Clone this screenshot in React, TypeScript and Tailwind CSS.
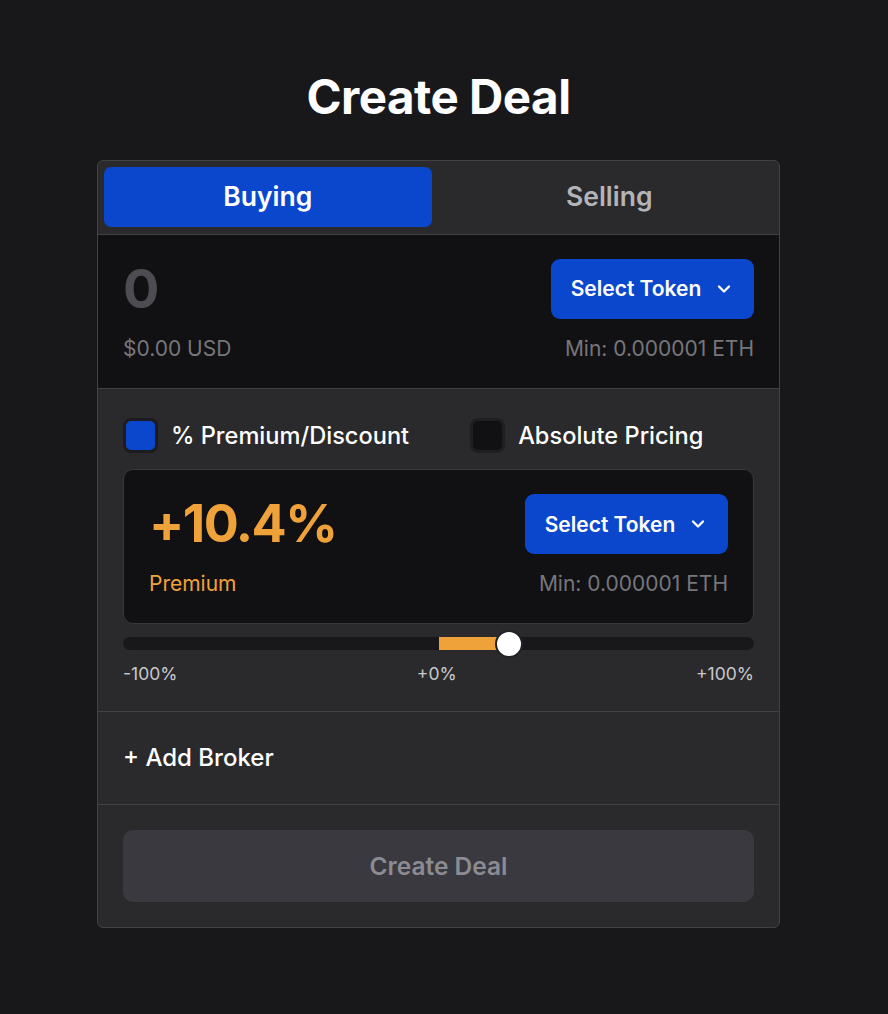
import { ChevronDown } from "lucide-react"

function SelectToken() {
    return (
        <button className="h-[60px] w-[203px] rounded-[9px] bg-[#0b47cc] text-white flex items-center justify-center gap-[13px] text-[21px] font-semibold">
            <span>Select Token</span>
            <ChevronDown size={20} strokeWidth={2.75} />
        </button>
    )
}

export default function App() {
    return (
        <div className="min-h-screen bg-[#18181b] pt-[73px] pb-[86px] pr-[11px] font-['Inter',sans-serif]">
            <h1 className="text-center text-white text-[47.5px] leading-[48px] font-bold tracking-[-0.5px]">Create Deal</h1>

            <div className="mx-auto mt-[39px] w-[683px] rounded-[6px] border border-[#414146] bg-[#2a2a2d] overflow-hidden">
                {/* tabs */}
                <div className="grid grid-cols-2 gap-[14px] p-[6px] pb-[7px]">
                    <div className="h-[60px] rounded-[7px] bg-[#0b47cc] text-white text-[26.5px] font-semibold flex items-center justify-center">Buying</div>
                    <div className="h-[60px] rounded-[7px] text-[#b4b4b8] text-[26.5px] font-semibold flex items-center justify-center">Selling</div>
                </div>

                {/* amount */}
                <div className="border-t border-[#414146] bg-[#111113] px-[25px] pt-[24px] pb-[26px] flex justify-between">
                    <div className="flex flex-col">
                        <div className="h-[60px] flex items-center text-[54px] font-bold text-[#4c4c52] leading-none">0</div>
                        <div className="mt-[17px] text-[21px] leading-[26px] text-[#76767c]">$0.00 USD</div>
                    </div>
                    <div className="flex flex-col items-end">
                        <SelectToken />
                        <div className="mt-[17px] text-[21px] leading-[26px] text-[#76767c]">Min: 0.000001 ETH</div>
                    </div>
                </div>

                {/* pricing */}
                <div className="border-t border-[#414146] px-[25px] pt-[29px] pb-[26px]">
                    <div className="flex items-center gap-[61px]">
                        <label className="flex items-center gap-[13px]">
                            <span className="w-[35px] h-[35px] rounded-[8px] border-[3px] border-[#1c1c20] bg-[#0b47cc]" />
                            <span className="text-white text-[23.6px] font-medium">% Premium/Discount</span>
                        </label>
                        <label className="flex items-center gap-[13px]">
                            <span className="w-[35px] h-[35px] rounded-[8px] border-[3px] border-[#1f1f23] bg-[#111113]" />
                            <span className="text-white text-[23.6px] font-medium">Absolute Pricing</span>
                        </label>
                    </div>

                    <div className="mt-[16px] rounded-[10px] border border-[#38383d] bg-[#111113] px-[25px] pt-[24px] pb-[26px] flex justify-between">
                        <div className="flex flex-col">
                            <div className="h-[60px] flex items-center text-[52px] font-bold text-[#f0a23a] leading-none tracking-[-1.5px]">+10.4%</div>
                            <div className="mt-[17px] text-[21px] leading-[26px] text-[#f0a23a]">Premium</div>
                        </div>
                        <div className="flex flex-col items-end">
                            <SelectToken />
                            <div className="mt-[17px] text-[21px] leading-[26px] text-[#76767c]">Min: 0.000001 ETH</div>
                        </div>
                    </div>

                    {/* slider */}
                    <div className="relative mt-[13px] h-[13px] rounded-full bg-[#18181b]">
                        <div className="absolute top-0 bottom-0 left-[50%] w-[11.2%] bg-[#f0a23a]" />
                        <div className="absolute top-1/2 left-[61.2%] w-[28px] h-[28px] -translate-x-1/2 -translate-y-1/2 rounded-full bg-white border-[2px] border-[#222226]" />
                    </div>
                    <div className="mt-[13px] flex justify-between text-[17.5px] leading-[22px] text-[#c9c9cd]">
                        <span>-100%</span>
                        <span>+0%</span>
                        <span>+100%</span>
                    </div>
                </div>

                {/* broker */}
                <div className="border-t border-[#414146] h-[93px] px-[25px] flex items-center text-white text-[24px] font-medium">
                    + Add Broker
                </div>

                {/* submit */}
                <div className="border-t border-[#414146] px-[25px] pt-[25px] pb-[25px]">
                    <button className="w-full h-[72px] rounded-[10px] bg-[#39393f] text-[#8b8b91] text-[24.5px] font-semibold">Create Deal</button>
                </div>
            </div>
        </div>
    )
}
